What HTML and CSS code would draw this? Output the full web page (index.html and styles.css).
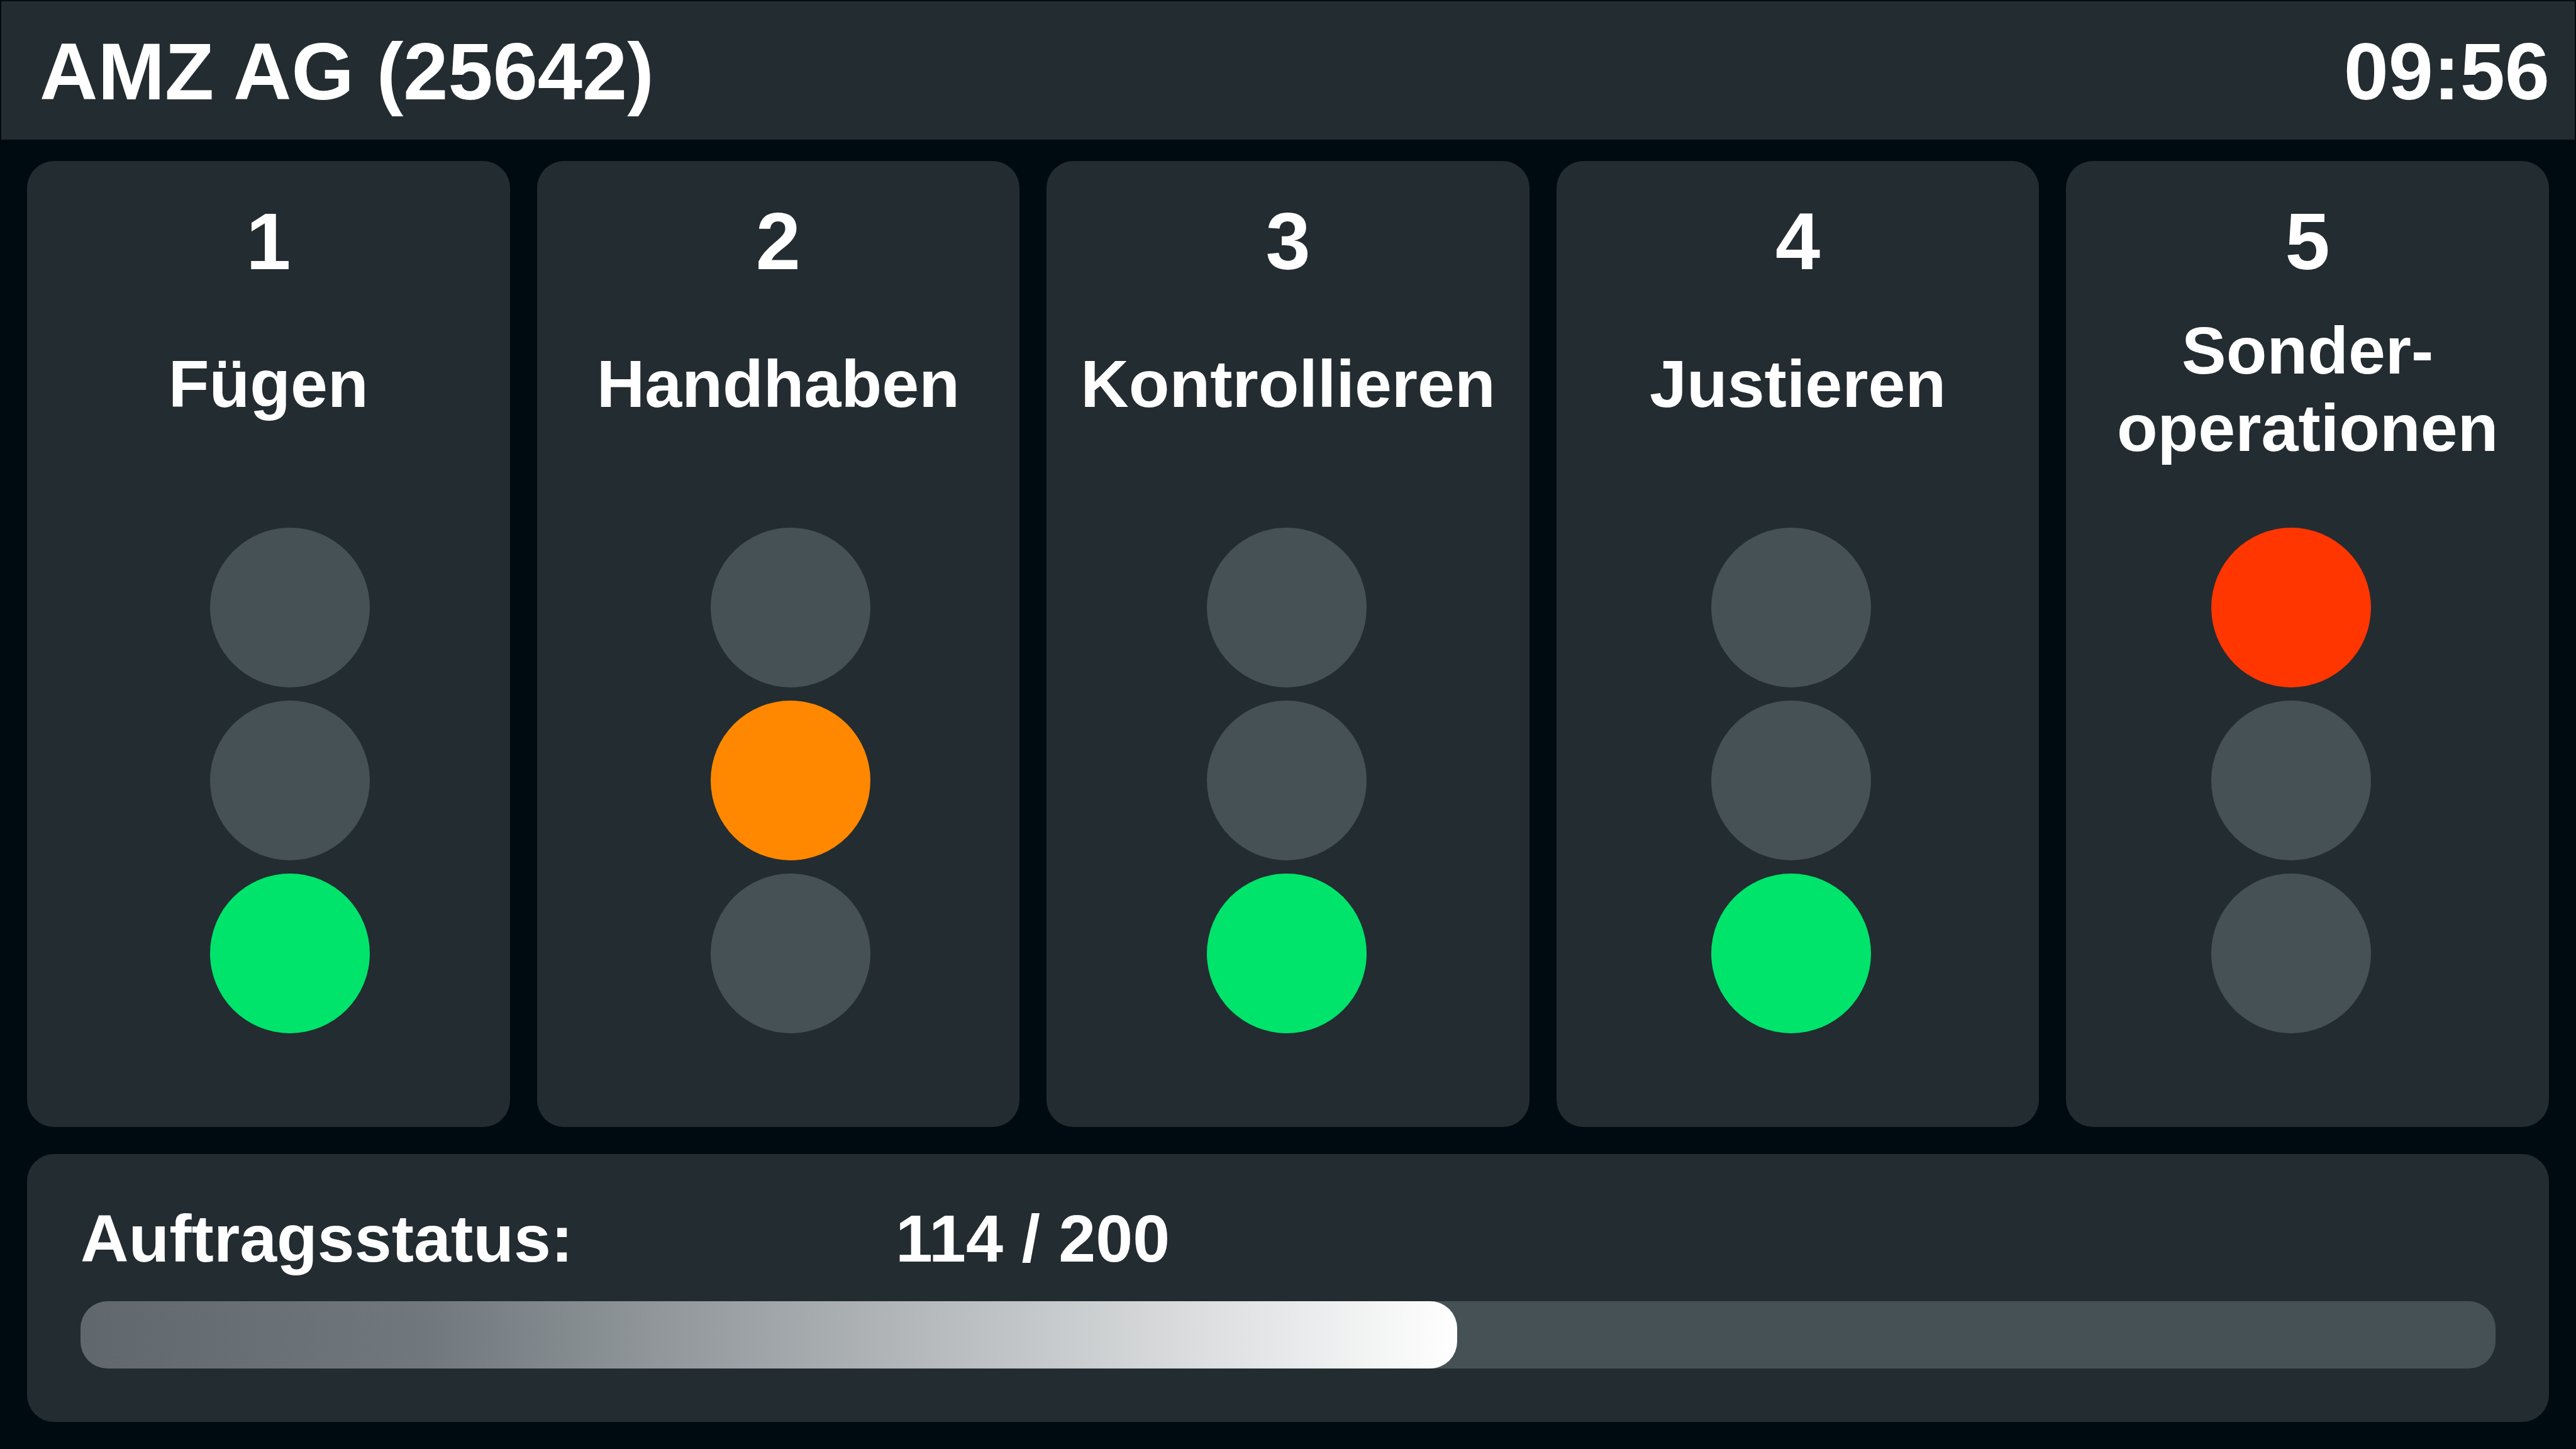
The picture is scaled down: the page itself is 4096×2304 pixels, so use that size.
FILE: index.html
```html
<!DOCTYPE html>
<html lang="de">
<head>
<meta charset="utf-8">
<meta name="viewport" content="width=device-width, initial-scale=1">
<title>AMZ AG (25642)</title>
<link rel="stylesheet" href="styles.css">
</head>
<body>
<header class="topbar">
  <h1 class="topbar-title">AMZ AG (25642)</h1>
  <time class="topbar-time" datetime="09:56">09:56</time>
</header>
<main class="board">
  <div class="stations">
    <section class="card station station-1">
      <p class="station-number">1</p>
      <h2 class="station-name">Fügen</h2>
      <div class="lights">
        <span class="light"></span>
        <span class="light"></span>
        <span class="light green"></span>
      </div>
    </section>
    <section class="card station station-2">
      <p class="station-number">2</p>
      <h2 class="station-name">Handhaben</h2>
      <div class="lights">
        <span class="light"></span>
        <span class="light orange"></span>
        <span class="light"></span>
      </div>
    </section>
    <section class="card station station-3">
      <p class="station-number">3</p>
      <h2 class="station-name">Kontrollieren</h2>
      <div class="lights">
        <span class="light"></span>
        <span class="light"></span>
        <span class="light green"></span>
      </div>
    </section>
    <section class="card station station-4">
      <p class="station-number">4</p>
      <h2 class="station-name">Justieren</h2>
      <div class="lights">
        <span class="light"></span>
        <span class="light"></span>
        <span class="light green"></span>
      </div>
    </section>
    <section class="card station station-5">
      <p class="station-number">5</p>
      <h2 class="station-name two-lines">Sonder-<br>operationen</h2>
      <div class="lights">
        <span class="light red"></span>
        <span class="light"></span>
        <span class="light"></span>
      </div>
    </section>
  </div>
  <section class="card order">
    <div class="order-text">
      <label for="order-progress">Auftragsstatus:</label>
      <span>114 / 200</span>
    </div>
    <progress class="order-bar" id="order-progress" value="114" max="200"></progress>
  </section>
</main>
</body>
</html>
```

FILE: styles.css
```css
* {
  box-sizing: border-box;
}

body {
  display: flex;
  flex-direction: column;
  gap: 32px;
  min-height: 100vh;
  margin: 0;
  background: #000b11;
  color: #fff;
  font-family: "Liberation Sans", Arial, sans-serif;
  font-weight: bold;
}

h1,
h2,
p {
  margin: 0;
  font-weight: bold;
}

.topbar {
  display: flex;
  justify-content: space-between;
  padding: 38px 40px 34px 61px;
  border: 2px solid #000b11;
  background: #232c31;
}

.topbar-title,
.topbar-time,
.station-number {
  font-size: 128px;
  line-height: 148px;
}

.board {
  display: flex;
  flex: 1;
  flex-direction: column;
  gap: 43px;
  padding: 0 43px 43px;
}

.card {
  border-radius: 43px;
  background: #232c31;
}

.stations {
  display: grid;
  flex: 1;
  grid-template-columns: repeat(5, minmax(0, 1fr));
  gap: 43px;
}

.station {
  padding-top: 54px;
  text-align: center;
}

.station-name {
  display: flex;
  align-items: center;
  justify-content: center;
  height: 246px;
  margin: 38px 0 97px;
  padding-bottom: 18px;
  font-size: 106px;
  line-height: 123px;
}

.station-name.two-lines {
  padding-bottom: 0;
}

.lights {
  display: flex;
  flex-direction: column;
  gap: 21px;
}

/* The light columns are spread more tightly than the cards. */
.station-1 .lights { padding-left: 291px; }
.station-2 .lights { padding-left: 276px; }
.station-3 .lights { padding-left: 255px; }
.station-4 .lights { padding-left: 246px; }
.station-5 .lights { padding-left: 231px; }

.light {
  width: 254px;
  height: 254px;
  border-radius: 50%;
  background: #465156;
}

.light.green { background: #00e46b; }
.light.orange { background: #ff8800; }
.light.red { background: #ff3600; }

.order {
  padding: 73px 85px 85px;
}

.order-text {
  display: grid;
  grid-template-columns: 1296px 1fr;
  margin-bottom: 38px;
  font-size: 106px;
  line-height: 123px;
}

.order-bar {
  display: block;
  width: 100%;
  height: 107px;
  border: 0;
  border-radius: 43px;
  background: #465156;
  overflow: hidden;
  appearance: none;
}

.order-bar::-webkit-progress-bar {
  border-radius: 43px;
  background: #465156;
}

.order-bar::-webkit-progress-value {
  border-radius: 43px;
  background: linear-gradient(to right, #60686d, #70787d 25%, #fff);
}
```
